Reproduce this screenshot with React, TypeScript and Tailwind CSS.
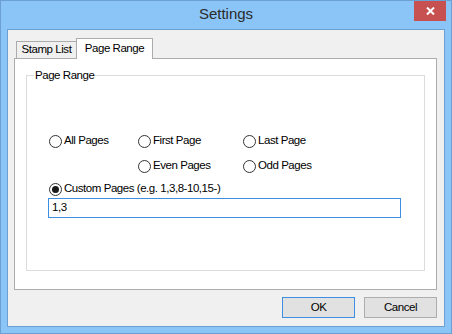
import React from "react";

const font = "font-['Liberation_Sans',Arial,sans-serif]";

const Radio = ({ label, checked = false }: { label: string; checked?: boolean }) => (
	<label className="flex items-center h-[16px] gap-[2px] whitespace-nowrap">
		<span className="w-[13px] h-[13px] rounded-full border border-[#333333] bg-white flex items-center justify-center shrink-0">
			{checked && <span className="w-[7px] h-[7px] rounded-full bg-[#1a1a1a]" />}
		</span>
		<span>{label}</span>
	</label>
);

const App = () => {
	return (
		<div
			className={`w-[452px] h-[334px] border border-[#6c9fd2] bg-[#8bc5f7] flex flex-col text-[11.5px] tracking-[-0.45px] text-black ${font}`}>
			{/* title bar */}
			<div className="relative h-[28px] flex items-center justify-center">
				<span className="text-[15px] tracking-normal text-[#2b2b2b] -mt-[1px]">Settings</span>
				<div className="absolute right-[5px] top-0 w-[32px] h-[20px] bg-[#c75050] flex items-center justify-center">
					<svg width="9" height="8" viewBox="0 0 9 8">
						<path d="M1 0.5 L8 7.5 M8 0.5 L1 7.5" stroke="white" strokeWidth="2" />
					</svg>
				</div>
			</div>

			{/* client area */}
			<div className="ml-[6px] w-[438px] h-[298px] border border-[#6c9fd2] bg-[#f0f0f0] flex flex-col">
				<div className="ml-[6px] mt-[8px] w-[423px] flex flex-col">
					<div className="flex items-end h-[20px] pl-[2px]">
						<div className="h-[17px] w-[60px] border-t border-l border-[#acacac] bg-[#f0f0f0] flex items-center justify-center">
							Stamp List
						</div>
						<div className="relative z-10 h-[21px] -mb-[1px] w-[77px] border-t border-l border-r border-[#acacac] bg-white flex items-center justify-center pb-[1px]">
							Page Range
						</div>
					</div>
					<div className="h-[232px] border border-[#acacac] bg-white">
						<fieldset className="ml-[11px] mt-[8px] w-[399px] h-[204px] border border-[#dcdcdc]">
							<legend className="ml-[7px] px-[1px] leading-[16px]">Page Range</legend>
							<div className="pt-[50px] pl-[22px]">
								<div className="grid grid-cols-[89px_105px_auto] gap-y-[9px]">
									<Radio label="All Pages" />
									<Radio label="First Page" />
									<Radio label="Last Page" />
									<span />
									<Radio label="Even Pages" />
									<Radio label="Odd Pages" />
								</div>
								<div className="mt-[7px]">
									<Radio label="Custom Pages (e.g. 1,3,8-10,15-)" checked />
								</div>
								<div className="-ml-[1px] mt-[1px] w-[353px] h-[20px] border border-[#3c8fe2] flex items-center px-[3px]">
									1,3
								</div>
							</div>
						</fieldset>
					</div>
				</div>

				<div className="flex justify-end gap-[9px] mr-[7px] mt-[7px]">
					<button className="w-[73px] h-[21px] border border-[#3c8fe2] bg-[#e1e1e1] flex items-center justify-center">
						OK
					</button>
					<button className="w-[73px] h-[21px] border border-[#adadad] bg-[#e1e1e1] flex items-center justify-center">
						Cancel
					</button>
				</div>
			</div>
		</div>
	);
};

export default App;
